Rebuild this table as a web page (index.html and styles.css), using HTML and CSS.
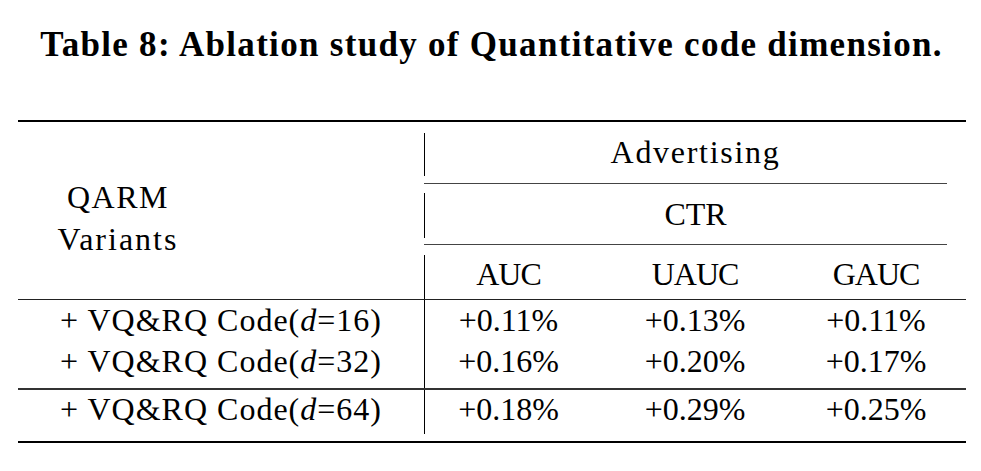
FILE: index.html
```html
<!DOCTYPE html>
<html>
<head>
<meta charset="utf-8">
<link rel="stylesheet" href="styles.css">
</head>
<body>
<div class="page">
  <h1 class="caption">Table 8: Ablation study of Quantitative code dimension.</h1>
  <div class="table">
    <div class="head">
      <div class="head-left">
        <div class="variants"><span class="qarm">QARM</span><br><span class="var">Variants</span></div>
      </div>
      <div class="head-right">
        <div class="hrow hrow-a">
          <div class="vbar vbar-a"></div>
          <div class="hspan adv">Advertising</div>
        </div>
        <div class="cmid"></div>
        <div class="hrow hrow-b">
          <div class="vbar vbar-b"></div>
          <div class="hspan">CTR</div>
        </div>
        <div class="cmid"></div>
        <div class="hrow hrow-c">
          <div class="vbar vbar-c"></div>
          <div class="cols metrics">
            <div class="c c2">AUC</div>
            <div class="c c3">UAUC</div>
            <div class="c c4">GAUC</div>
          </div>
        </div>
      </div>
    </div>
    <div class="midrule"></div>
    <div class="group group-1">
      <div class="names">
        <div class="name">+ VQ&amp;RQ Code(<i>d</i>=16)</div>
        <div class="name">+ VQ&amp;RQ Code(<i>d</i>=32)</div>
      </div>
      <div class="vbar vbar-full"></div>
      <div class="vals">
        <div class="cols">
          <div class="c c2">+0.11%</div>
          <div class="c c3">+0.13%</div>
          <div class="c c4">+0.11%</div>
        </div>
        <div class="cols">
          <div class="c c2">+0.16%</div>
          <div class="c c3">+0.20%</div>
          <div class="c c4">+0.17%</div>
        </div>
      </div>
    </div>
    <div class="sep"></div>
    <div class="group group-2">
      <div class="names">
        <div class="name">+ VQ&amp;RQ Code(<i>d</i>=64)</div>
      </div>
      <div class="vbar vbar-last"></div>
      <div class="vals">
        <div class="cols">
          <div class="c c2">+0.18%</div>
          <div class="c c3">+0.29%</div>
          <div class="c c4">+0.25%</div>
        </div>
      </div>
    </div>
  </div>
</div>
</body>
</html>
```

FILE: styles.css
```css
html, body {
  margin: 0;
  padding: 0;
  background: #fff;
}

body {
  width: 981px;
  height: 471px;
  overflow: hidden;
  color: #000;
  font-family: "Liberation Serif", "Times New Roman", serif;
}

.page {
  padding-top: 25px;
}

.caption {
  margin: 0;
  font-size: 35px;
  line-height: 40px;
  font-weight: bold;
  letter-spacing: 1.3px;
  text-align: center;
  padding-left: 2px;
}

.table {
  margin-top: 55px;
  margin-left: 18px;
  width: 948px;
  border-top: 2px solid #000;
  border-bottom: 2px solid #000;
  font-size: 32px;
}

.head {
  display: flex;
}

.head-left {
  width: 406px;
  flex: none;
}

.variants {
  width: 200px;
  text-align: center;
  line-height: 42px;
  padding-top: 54px;
}

.qarm {
  letter-spacing: 1.5px;
}

.var {
  letter-spacing: 2px;
}

.head-right {
  flex: 1;
  display: flex;
  flex-direction: column;
}

.hrow {
  display: flex;
}

.vbar {
  width: 0;
  flex: none;
  border-left: 1.4px solid #000;
}

.hspan {
  flex: 1;
  text-align: center;
}

.adv {
  letter-spacing: 1.7px;
}

.hrow-a {
  height: 61px;
  line-height: 61px;
}

.vbar-a {
  margin-top: 11px;
  margin-bottom: 7px;
}

.hrow-b {
  height: 60px;
  line-height: 60px;
}

.vbar-b {
  margin-top: 9px;
  margin-bottom: 6px;
}

.hrow-c {
  height: 54px;
}

.hrow-c .cols {
  line-height: 50px;
  padding-top: 4px;
}

.metrics {
  letter-spacing: -1px;
}

.vbar-c {
  margin-top: 10px;
}

.cmid {
  height: 1px;
  background: #444;
  margin-right: 19px;
}

.cols {
  display: grid;
  grid-template-columns: 167px 206px 168px;
  flex: 1;
}

.c {
  text-align: center;
}

.c4 {
  padding-right: 12px;
}

.midrule {
  height: 1px;
  background: #222;
}

.sep {
  height: 1.5px;
  background: #333;
}

.group {
  display: flex;
}

.names {
  width: 406px;
  flex: none;
  text-align: center;
}

.name {
  letter-spacing: 1px;
}

.name i {
  font-style: italic;
}

.vals {
  flex: 1;
}

.group-1 {
  line-height: 41px;
  height: 88px;
}

.group-2 {
  line-height: 38px;
  height: 51px;
}

.vbar-last {
  margin-bottom: 7px;
}
```
